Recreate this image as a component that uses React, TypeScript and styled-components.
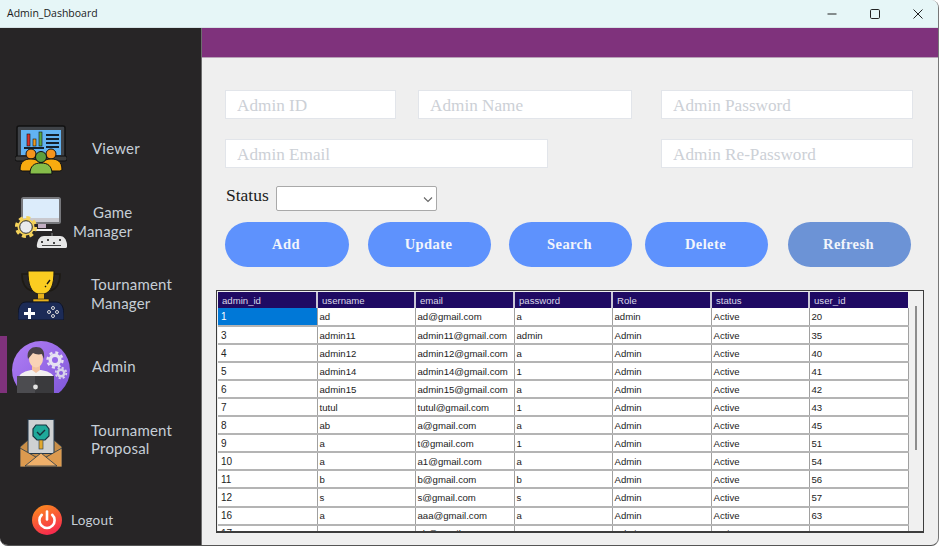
import React from "react";
import styled, { createGlobalStyle } from "styled-components";

const GlobalStyle = createGlobalStyle`
  html, body {
    margin: 0;
    padding: 0;
    background: #ffffff;
    overflow: hidden;
  }
  * { box-sizing: border-box; }
`;

const Frame = styled.div`
  width: 939px;
  height: 546px;
  display: flex;
  flex-direction: column;
  overflow: hidden;
  background: #efefef;
  border-right: 1px solid #777;
  border-bottom: 1px solid #555;
  border-radius: 0 8px 8px 8px;
`;

const TitleBar = styled.div`
  height: 28px;
  flex: none;
  display: flex;
  align-items: center;
  background: #e6f6f7;
  border-bottom: 1px solid #d5e2e4;
  padding: 0 0 0 7px;
`;

const Title = styled.div`
  flex: 1;
  font: 10.5px "Open Sans", sans-serif;
  color: #1b1b1b;
  margin-bottom: 1px;
`;

const WinButton = styled.div`
  width: 43px;
  height: 27px;
  display: flex;
  align-items: center;
  justify-content: center;
  padding-left: 2px;
`;

const Body = styled.div`
  flex: 1;
  display: flex;
  min-height: 0;
`;

const Sidebar = styled.nav`
  width: 202px;
  flex: none;
  background: #272526;
  padding-top: 97px;
  border-right: 1px solid #6d6d6d;
`;

const NavItem = styled.div<{ $mt: number; $pad: number; $gap: number; $h: number }>`
  display: flex;
  align-items: center;
  margin-top: ${(p) => p.$mt}px;
  padding-left: ${(p) => p.$pad}px;
  gap: ${(p) => p.$gap}px;
  height: ${(p) => p.$h}px;
`;

const Marker = styled.div`
  width: 7px;
  height: 57px;
  background: #7f327c;
`;

const NavLabel = styled.div<{ $right?: boolean; $size?: number; $lift?: number; $drop?: number; $ml?: number }>`
  font: ${(p) => p.$size ?? 15}px/18.5px Lato, sans-serif;
  letter-spacing: 0.2px;
  color: #c6ced6;
  text-align: ${(p) => (p.$right ? "right" : "left")};
  margin-bottom: ${(p) => p.$lift ?? 0}px;
  margin-top: ${(p) => p.$drop ?? 0}px;
  margin-left: ${(p) => p.$ml ?? 0}px;
`;

const Main = styled.main`
  flex: 1;
  display: flex;
  flex-direction: column;
  min-width: 0;
`;

const Banner = styled.div`
  height: 30px;
  flex: none;
  background: #7f327c;
  border-bottom: 1px solid #b9a2b8;
`;

const Content = styled.div`
  flex: 1;
  padding: 32px 0 0 23px;
`;

const FieldRow = styled.div<{ $mb: number }>`
  display: flex;
  margin-bottom: ${(p) => p.$mb}px;
`;

const Field = styled.input<{ $w: number; $mr: number }>`
  width: ${(p) => p.$w}px;
  margin-right: ${(p) => p.$mr}px;
  height: 29px;
  background: #fff;
  border: 1px solid #e2e5ea;
  outline: none;
  padding: 2px 11px 0;
  font: 17.2px "Liberation Serif", serif;
  &::placeholder {
    color: #ccd0d6;
    opacity: 1;
  }
`;

const StatusRow = styled.div`
  display: flex;
  align-items: center;
  gap: 7px;
  height: 25px;
  margin-bottom: 11px;
  padding-left: 1px;
`;

const StatusLabel = styled.label`
  font: 17.5px "Liberation Serif", serif;
  color: #1c1c1c;
  margin-top: -7px;
`;

const SelectBox = styled.div`
  width: 161px;
  height: 25px;
  background: #fff;
  border: 1px solid #a9a9a9;
  border-radius: 2px;
  display: flex;
  align-items: center;
  justify-content: flex-end;
  padding-right: 2px;
`;

const Buttons = styled.div`
  display: flex;
  margin-bottom: 23px;
`;

const ActionButton = styled.button<{ $w: number; $mr: number; $muted?: boolean }>`
  width: ${(p) => p.$w}px;
  margin-right: ${(p) => p.$mr}px;
  height: 45px;
  border: none;
  border-radius: 23px;
  background: ${(p) => (p.$muted ? "#6c93d6" : "#5e92fd")};
  color: #f2f5fb;
  font: bold 14.5px "Liberation Serif", serif;
  letter-spacing: 0.4px;
  padding: 0 2px 0 0;
`;

const GridFrame = styled.div`
  width: 708px;
  height: 243px;
  margin-left: -9px;
  display: flex;
  border: 1px solid #3c3c3c;
  border-bottom-width: 2px;
  padding: 1px 0 0 1px;
  overflow: hidden;
  background: #f0f0f0;
`;

const Table = styled.table`
  width: 690px;
  flex: none;
  align-self: flex-start;
  table-layout: fixed;
  border-collapse: collapse;
  font: 9.6px "Liberation Sans", sans-serif;
`;

const HeadCell = styled.th`
  height: 16px;
  background: #1f0a63;
  color: #d9d6e8;
  font-weight: normal;
  text-align: left;
  padding: 0 0 0 4px;
  border-left: 2px solid #c9c7d6;
  line-height: 13px;
  &:first-child {
    border-left: none;
  }
`;

const Row = styled.tr`
  height: 18.05px;
  background: #fff;
`;

const Cell = styled.td<{ $selected?: boolean }>`
  padding: 0 0 0 2px;
  border-right: 1px solid #a0a0a0;
  border-bottom: 2px solid #b4b4b4;
  color: ${(p) => (p.$selected ? "#fff" : "#222")};
  background: ${(p) => (p.$selected ? "#0078d7" : "transparent")};
  white-space: nowrap;
  overflow: hidden;
  &:first-child {
    padding-left: 3px;
    font-size: 10px;
  }
`;

const Gutter = styled.div`
  flex: 1;
  display: flex;
  justify-content: center;
  padding-top: 14px;
`;

const Thumb = styled.div`
  width: 2px;
  height: 144px;
  background: #8c8c8c;
`;

const IconSvg = styled.svg`
  display: block;
  flex: none;
`;

const ViewerIcon = () => (
  <IconSvg width={52} height={52} viewBox="0 0 52 52">
    <rect x="2" y="1" width="48" height="33" rx="2" fill="#3f4348" stroke="#111" strokeWidth="1.5" />
    <rect x="6" y="5" width="40" height="25" fill="#62b3f2" />
    <rect x="12" y="9" width="3" height="12" fill="#d8322c" stroke="#111" strokeWidth="0.6" />
    <rect x="18" y="14" width="3" height="7" fill="#f09a1d" stroke="#111" strokeWidth="0.6" />
    <rect x="24" y="7" width="3" height="14" fill="#5aa845" stroke="#111" strokeWidth="0.6" />
    <path d="M9 22h20v2H9zM31 9h13v2H31zM31 13h13v2H31zM31 17h13v2H31zM31 21h13v2H31z" fill="#14202b" />
    <rect x="0" y="31" width="52" height="5" rx="2" fill="#3d3d3d" stroke="#111" />
    <circle cx="16" cy="29" r="5" fill="#f5941d" stroke="#111" />
    <circle cx="36" cy="29" r="5" fill="#f5941d" stroke="#111" />
    <path d="M5 45c0-9 5-11 11-11s9 3 10 6l-3 6H7z" fill="#f8ab10" stroke="#111" />
    <path d="M47 45c0-9-5-11-11-11s-9 3-10 6l3 6h16z" fill="#f8ab10" stroke="#111" />
    <circle cx="26" cy="32" r="5.5" fill="#5c9e3d" stroke="#111" />
    <path d="M15 49c0-8 4-11 11-11s11 3 11 11z" fill="#86bd4a" stroke="#111" />
  </IconSvg>
);

const GameManagerIcon = () => (
  <IconSvg width={52} height={52} viewBox="0 0 52 52">
    <rect x="7" y="1" width="38" height="25" rx="1.5" fill="#dcecfb" stroke="#77787c" strokeWidth="2" />
    <path d="M8 21h36v4H8z" fill="#c9c9cf" />
    <path d="M23 27h8v4h-8z" fill="#c2aec2" />
    <path d="M18 32h19v2H18z" fill="#f3f3f3" />
    <circle cx="11" cy="30" r="8.5" fill="#f5d35a" />
    <circle cx="11" cy="30" r="9.6" fill="none" stroke="#f5d35a" strokeWidth="3" strokeDasharray="4 3.54" />
    <circle cx="11" cy="30" r="6.3" fill="#e9ebee" stroke="#2a2a2a" />
    <path d="M36 36h2v3h-2z" fill="#555" />
    <path d="M24 51c-2 0-2.500-1-2-4 1-5 3-8 7-8h16c4 0 6 3 7 8 .5 3 0 4-2 4z" fill="#e6e6e6" />
    <path d="M26 44h2v2h-2zM32 42h2v2h-2zM38 45h2v2h-2zM44 42h2v2h-2zM27 48h19v1H27z" fill="#444" />
  </IconSvg>
);

const TrophyIcon = () => (
  <IconSvg width={46} height={50} viewBox="0 0 46 50">
    <path d="M11 4H4c0 10 3 15 10 17M35 4h7c0 10-3 15-10 17" fill="none" stroke="#1d1a14" strokeWidth="1.6" />
    <path d="M10 1h26c0 14-3 21-10 23h-6C13 22 10 15 10 1z" fill="#fbcd21" stroke="#1d1a14" />
    <path d="M29 14l3-4M27 17l1-1" stroke="#1d1a14" strokeWidth="1.4" />
    <rect x="20" y="24" width="6" height="5" fill="#e8b11b" />
    <path d="M15 29h16v3H15z" fill="#e8b11b" stroke="#1d1a14" strokeWidth="0.6" />
    <path d="M0 46c0-8 2-14 8-14h30c6 0 8 6 8 14v4H0z" fill="#1c2b57" stroke="#0f1424" />
    <path d="M10 38v4H6v3h4v4h3v-4h4v-3h-4v-4z" fill="#fff" />
    <circle cx="35" cy="38" r="1.5" fill="none" stroke="#ddd" />
    <circle cx="35" cy="46" r="1.5" fill="none" stroke="#ddd" />
    <circle cx="31" cy="42" r="1.5" fill="none" stroke="#ddd" />
    <circle cx="39" cy="42" r="1.5" fill="none" stroke="#ddd" />
  </IconSvg>
);

const AdminIcon = () => (
  <IconSvg width={58} height={57} viewBox="0 0 58 57">
    <defs>
      <linearGradient id="adminBg" x1="0" y1="0" x2="1" y2="1">
        <stop offset="0" stopColor="#b37ff6" />
        <stop offset="1" stopColor="#7c55d8" />
      </linearGradient>
      <clipPath id="adminClip">
        <rect x="0" y="0" width="58" height="57" />
      </clipPath>
    </defs>
    <g clipPath="url(#adminClip)">
      <circle cx="29" cy="34" r="29" fill="url(#adminBg)" />
      <path d="M7 41c1-4 7-6 12-7h10c6 1 11 3 13 7z" fill="#f2f0f0" />
      <path d="M20 28h8v6l-4 3-4-3z" fill="#f3c2a0" />
      <ellipse cx="24" cy="23" rx="7" ry="8.5" fill="#f9d3b6" />
      <path d="M16 23c-2-9 4-12 8-12 6 0 9 3 8 12l-2-5c-4 1-7 0-9-1z" fill="#4a4247" />
      <path d="M5 40h18v17H5z" fill="#4c4c50" />
      <path d="M23 40h19v17H23z" fill="#3a3a3d" />
      <circle cx="23.500" cy="51" r="2.400" fill="#e4e4e4" />
      <circle cx="43" cy="24" r="6.500" fill="#e7e2f2" />
      <circle cx="43" cy="24" r="7.500" fill="none" stroke="#e7e2f2" strokeWidth="2.400" strokeDasharray="3 2.900" />
      <circle cx="43" cy="24" r="3" fill="#9568e8" />
      <circle cx="49" cy="37" r="4.500" fill="#d8d2ea" />
      <circle cx="49" cy="37" r="5.300" fill="none" stroke="#d8d2ea" strokeWidth="1.800" strokeDasharray="2.200 1.960" />
      <circle cx="49" cy="37" r="2" fill="#8a5fdf" />
    </g>
  </IconSvg>
);

const ProposalIcon = () => (
  <IconSvg width={42} height={48} viewBox="0 0 42 48">
    <path d="M0 28l8-7h26l8 7v20H0z" fill="#c98e47" stroke="#24384a" strokeWidth="0.8" />
    <rect x="8" y="0.5" width="26" height="34" fill="#cfd1d2" stroke="#24384a" />
    <path d="M16 6h10l3 4v7l-4 4h-8l-4-4v-7z" fill="#1fa99a" stroke="#17343f" strokeWidth="1.2" />
    <path d="M17 13l3 3 5-5" fill="none" stroke="#16303a" strokeWidth="1.4" />
    <rect x="19" y="21" width="4" height="9" fill="#e2a82f" stroke="#24384a" strokeWidth="0.6" />
    <path d="M0 29l21 12 21-12v19H0z" fill="#dc9a4f" stroke="#24384a" strokeWidth="0.8" />
    <path d="M5 47l16-13 16 13z" fill="#efb06a" stroke="#24384a" strokeWidth="0.8" />
  </IconSvg>
);

const LogoutIcon = () => (
  <IconSvg width={30} height={30} viewBox="0 0 30 30">
    <defs>
      <linearGradient id="logoutBg" x1="0.2" y1="0" x2="0.6" y2="1">
        <stop offset="0" stopColor="#fb8b1e" />
        <stop offset="1" stopColor="#f7284f" />
      </linearGradient>
    </defs>
    <circle cx="15" cy="15" r="15" fill="url(#logoutBg)" />
    <path d="M9.800 9.800a7.600 7.600 0 1 0 10.400 0" fill="none" stroke="#fff" strokeWidth="2.600" strokeLinecap="round" />
    <path d="M15 6.500v8" stroke="#fff" strokeWidth="2.600" strokeLinecap="round" />
  </IconSvg>
);

const columns = ["admin_id", "username", "email", "password", "Role", "status", "user_id"];
const widths = [99, 98, 99, 98, 99, 98, 99];

const rows = [
  ["1", "ad", "ad@gmail.com", "a", "admin", "Active", "20"],
  ["3", "admin11", "admin11@gmail.com", "admin", "Admin", "Active", "35"],
  ["4", "admin12", "admin12@gmail.com", "a", "Admin", "Active", "40"],
  ["5", "admin14", "admin14@gmail.com", "1", "Admin", "Active", "41"],
  ["6", "admin15", "admin15@gmail.com", "a", "Admin", "Active", "42"],
  ["7", "tutul", "tutul@gmail.com", "1", "Admin", "Active", "43"],
  ["8", "ab", "a@gmail.com", "a", "Admin", "Active", "45"],
  ["9", "a", "t@gmail.com", "1", "Admin", "Active", "51"],
  ["10", "a", "a1@gmail.com", "a", "Admin", "Active", "54"],
  ["11", "b", "b@gmail.com", "b", "Admin", "Active", "56"],
  ["12", "s", "s@gmail.com", "s", "Admin", "Active", "57"],
  ["16", "a", "aaa@gmail.com", "a", "Admin", "Active", "63"],
  ["17", "a", "ab@gmail.com", "a", "Admin", "Active", "65"],
];

const App = () => {
  return (
    <>
      <GlobalStyle />
      <Frame>
        <TitleBar>
          <Title>Admin_Dashboard</Title>
          <WinButton>
            <svg width="12" height="12" viewBox="0 0 12 12">
              <path d="M1.500 6h9" stroke="#222" strokeWidth="1" />
            </svg>
          </WinButton>
          <WinButton>
            <svg width="12" height="12" viewBox="0 0 12 12">
              <rect x="1.500" y="1.500" width="9" height="9" rx="1.200" fill="none" stroke="#222" strokeWidth="1" />
            </svg>
          </WinButton>
          <WinButton>
            <svg width="12" height="12" viewBox="0 0 12 12">
              <path d="M1.500 1.500l9 9M10.500 1.500l-9 9" stroke="#222" strokeWidth="1" />
            </svg>
          </WinButton>
        </TitleBar>
        <Body>
          <Sidebar>
            <NavItem $mt={0} $pad={15} $gap={25} $h={52}>
              <ViewerIcon />
              <NavLabel $lift={6}>Viewer</NavLabel>
            </NavItem>
            <NavItem $mt={20} $pad={15} $gap={6} $h={52}>
              <GameManagerIcon />
              <NavLabel $right $lift={3}>
                Game
                <br />
                Manager
              </NavLabel>
            </NavItem>
            <NavItem $mt={21} $pad={18} $gap={27} $h={50}>
              <TrophyIcon />
              <NavLabel $lift={3}>
                Tournament
                <br />
                Manager
              </NavLabel>
            </NavItem>
            <NavItem $mt={16} $pad={0} $gap={5} $h={57}>
              <Marker />
              <AdminIcon />
              <NavLabel $ml={17} $drop={4}>Admin</NavLabel>
            </NavItem>
            <NavItem $mt={26} $pad={20} $gap={29} $h={48}>
              <ProposalIcon />
              <NavLabel $lift={8}>
                Tournament
                <br />
                Proposal
              </NavLabel>
            </NavItem>
            <NavItem $mt={38} $pad={32} $gap={9} $h={30}>
              <LogoutIcon />
              <NavLabel $size={13.5}>Logout</NavLabel>
            </NavItem>
          </Sidebar>
          <Main>
            <Banner />
            <Content>
              <FieldRow $mb={20}>
                <Field $w={171} $mr={22} placeholder="Admin ID" />
                <Field $w={214} $mr={29} placeholder="Admin Name" />
                <Field $w={252} $mr={0} placeholder="Admin Password" />
              </FieldRow>
              <FieldRow $mb={18}>
                <Field $w={323} $mr={113} placeholder="Admin Email" />
                <Field $w={252} $mr={0} placeholder="Admin Re-Password" />
              </FieldRow>
              <StatusRow>
                <StatusLabel>Status</StatusLabel>
                <SelectBox>
                  <svg width="12" height="12" viewBox="0 0 12 12">
                    <path d="M2 4.500l4 4 4-4" fill="none" stroke="#666" strokeWidth="1.100" />
                  </svg>
                </SelectBox>
              </StatusRow>
              <Buttons>
                <ActionButton $w={124} $mr={19}>Add</ActionButton>
                <ActionButton $w={123} $mr={18}>Update</ActionButton>
                <ActionButton $w={123} $mr={13}>Search</ActionButton>
                <ActionButton $w={123} $mr={20}>Delete</ActionButton>
                <ActionButton $w={123} $mr={0} $muted>Refresh</ActionButton>
              </Buttons>
              <GridFrame>
                <Table>
                  <colgroup>
                    {widths.map((w, i) => (
                      <col key={i} width={w} />
                    ))}
                  </colgroup>
                  <thead>
                    <tr>
                      {columns.map((c) => (
                        <HeadCell key={c}>{c}</HeadCell>
                      ))}
                    </tr>
                  </thead>
                  <tbody>
                    {rows.map((r) => (
                      <Row key={r[0]}>
                        {r.map((v, i) => (
                          <Cell key={i} $selected={r[0] === "1" && i === 0}>
                            {v}
                          </Cell>
                        ))}
                      </Row>
                    ))}
                  </tbody>
                </Table>
                <Gutter>
                  <Thumb />
                </Gutter>
              </GridFrame>
            </Content>
          </Main>
        </Body>
      </Frame>
    </>
  );
};

export default App;
